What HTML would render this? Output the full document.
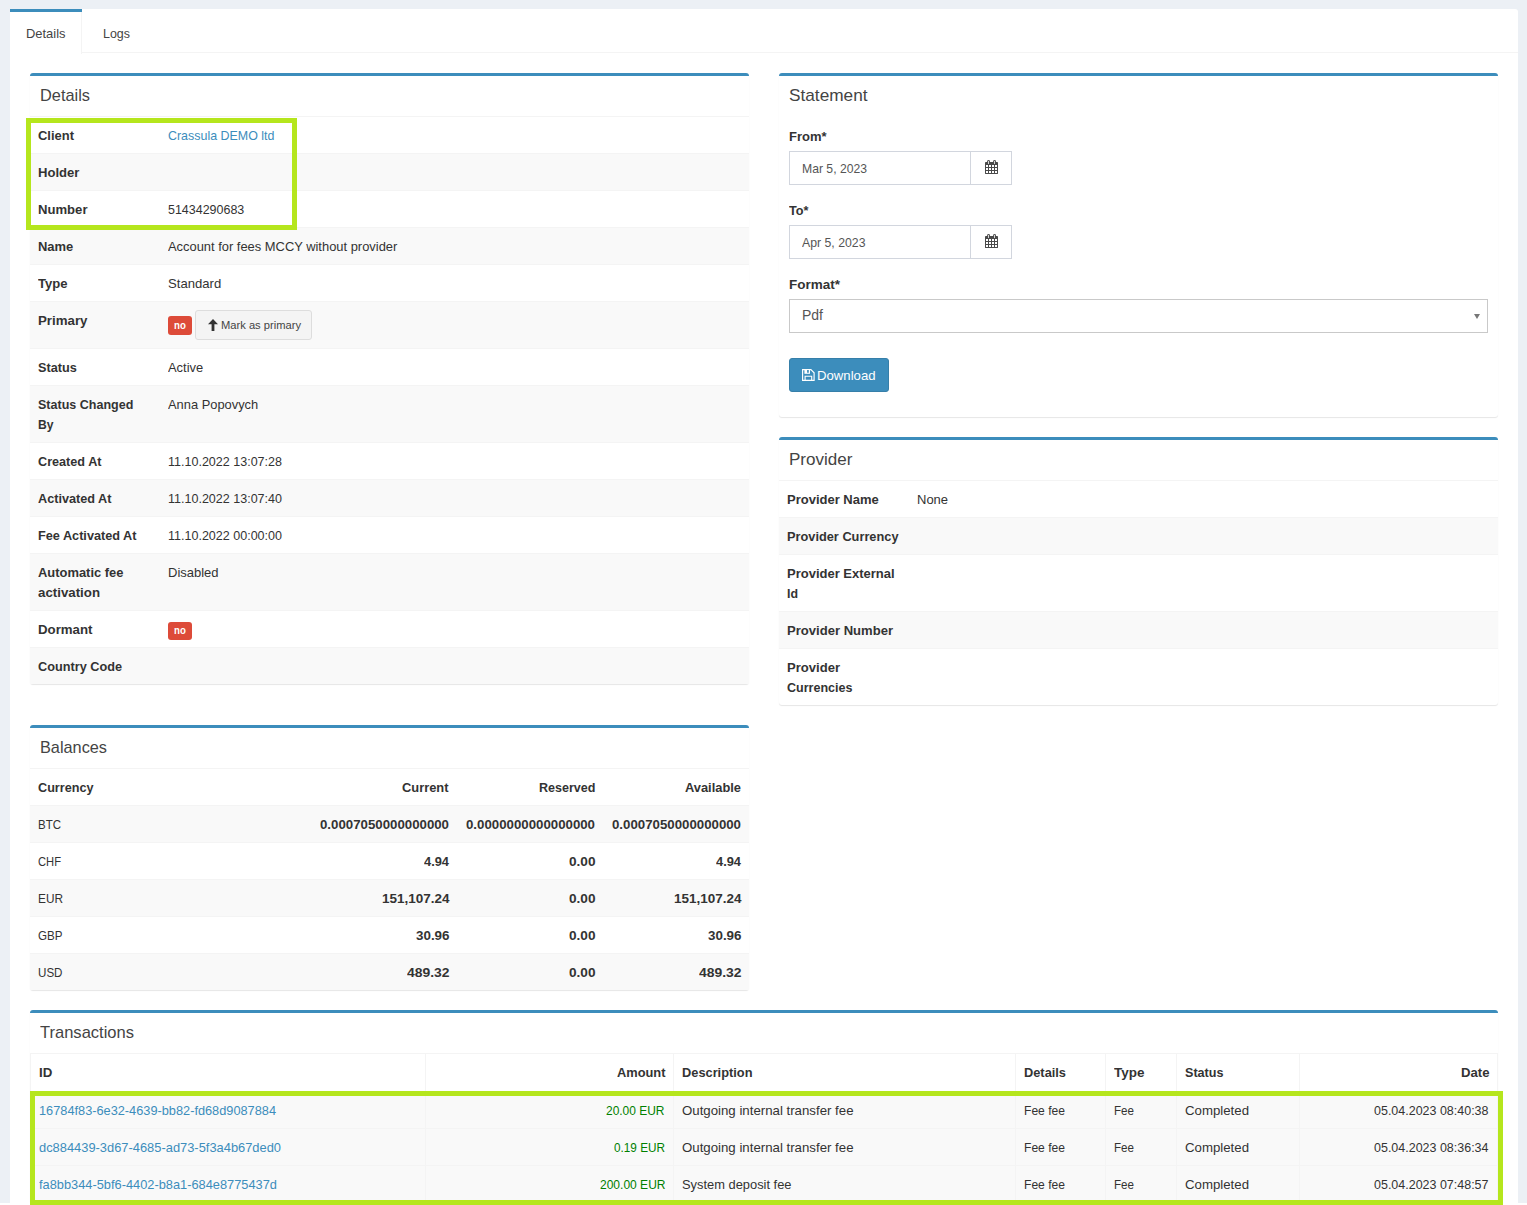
<!DOCTYPE html>
<html lang="en">
<head>
<meta charset="utf-8">
<title>Account details</title>
<style>
*{box-sizing:border-box}
html,body{margin:0;padding:0}
body{width:1527px;height:1205px;overflow:hidden;background:#ecf0f5;font-family:"Liberation Sans", sans-serif;font-size:13px;line-height:20px;color:#333;position:relative}
.t{white-space:nowrap;display:inline-block;transform-origin:0 50%}
.strip{position:absolute;left:0;top:1203px;width:1527px;height:2px;background:#fff}
.card{position:absolute;left:10px;top:9px;width:1508px;height:1196px;background:#fff;border-radius:3px 3px 0 0}
.tabs{position:absolute;left:0;top:0;width:1508px;height:44px;margin:0;padding:0;list-style:none;border-bottom:1px solid #f4f4f4}
.tabs li{position:absolute;top:0;height:44px;border-top:3px solid transparent;padding:12px 0 0 0;color:#444}
.tabs li.active{left:0;width:72px;height:45px;border-top-color:#3c8dbc;background:#fff linear-gradient(#f4f4f4,#f4f4f4) right top/1px 100% no-repeat;padding-left:16px}
.tabs li.logs{left:93px}
.box{position:absolute;background:#fff;border-top:3px solid #3c8dbc;border-radius:3px;box-shadow:0 1px 1px rgba(0,0,0,.1)}
.box-h{height:41px;border-bottom:1px solid #f4f4f4;padding:8px 0 0 10px;font-size:16.6px;line-height:24px;color:#444}
table{border-collapse:separate;border-spacing:0;width:100%;table-layout:fixed}
th,td{padding:9px 8px 7px;vertical-align:top;text-align:left;line-height:20px;border-top:1px solid #f4f4f4;height:37px}
.kv tr:first-child>th,.kv tr:first-child>td,thead tr>th{border-top:0;height:36px}
th{font-weight:700}
.kv th{width:130px}
.kv tr:nth-child(even){background:#f9f9f9}
.kv tr.two>th,.kv tr.two>td{height:57px}
.kv tr.primary>th,.kv tr.primary>td{height:47px}
.kv tr.primary>td{padding-bottom:0}
.lnk{color:#3c8dbc;text-decoration:none}
.badge{display:inline-block;vertical-align:top;width:24px;height:18px;margin-top:2px;margin-bottom:0;border-radius:3px;background:#dd4b39;color:#fff;font-size:10px;font-weight:700;line-height:18px;text-align:center}
.kv tr.primary .badge{margin-top:5px;height:19px;line-height:19px}
.btn-sm{display:inline-block;vertical-align:top;margin:-1px 0 0 3px;width:117px;height:30px;border:1px solid #ddd;border-radius:3px;background:#f4f4f4;color:#444;font-size:11px;line-height:28px;padding-left:12px;white-space:nowrap}
.ico-up{display:inline-block;vertical-align:top;margin:8px 3px 0 0}
.r{text-align:right}
.b{font-weight:700}
.green{color:#008000}
.striped tbody tr:nth-child(odd){background:#f9f9f9}
.bal th:nth-child(n+2),.bal td:nth-child(n+2){width:146px}
.txt{width:1468px}
.txt tbody tr{background:#f9f9f9}
.txt th,.txt td{border-right:1px solid #f4f4f4}
.txt th:first-child,.txt td:first-child{border-left:1px solid #f4f4f4}
.txt thead th{border-top:0;height:37px;border-bottom:0}
.txt tbody tr>td,.txt tbody tr:first-child>td{height:37px;border-top:1px solid #f4f4f4}
.form{padding:10px}
.form label{display:block;font-weight:700;height:20px;margin:0 0 4px 0}
.fg{height:74px}
.ig{display:flex;width:223px;height:34px}
.ig .inp{width:182px;height:34px;border:1px solid #d2d6de;padding:7px 12px 5px;color:#555;line-height:20px}
.ig .add{width:41px;height:34px;border:1px solid #d2d6de;border-left:0;position:relative}
.cal{position:absolute;left:13.5px;top:8px}
.sel{height:34px;width:699px;border:1px solid #c9c9c9;padding:5px 12px;color:#555;font-size:14px;line-height:20px;position:relative;margin-top:0}
.sel i{position:absolute;right:7px;top:14px;width:0;height:0;border-left:3.5px solid transparent;border-right:3.5px solid transparent;border-top:5px solid #777}
.btn{margin-top:9px;width:100px;height:34px;border:1px solid #367fa9;border-radius:3px;background:#3c8dbc;color:#fff;line-height:34px;padding-left:27px;position:relative;white-space:nowrap}
.sav{position:absolute;left:12px;top:10px}
.hl{position:absolute;border:5px solid #b5e61d;pointer-events:none}
</style>
</head>
<body>
<div class="card">
 <ul class="tabs">
  <li class="active"><span class="t" style="transform:scaleX(0.9937);margin-right:-0.25px">Details</span></li>
  <li class="logs"><span class="t" style="transform:scaleX(0.9573);margin-right:-1.20px">Logs</span></li>
 </ul>

 <div class="box" style="left:20px;top:64px;width:719px;height:611px">
  <div class="box-h"><span class="t" style="transform:scaleX(0.9855);margin-right:-0.73px">Details</span></div>
  <table class="kv">
<tr class=""><th><span class="t" style="transform:scaleX(0.9965);margin-right:-0.12px">Client</span></th><td><a class="lnk"><span class="t" style="transform:scaleX(0.9564);margin-right:-4.85px">Crassula DEMO ltd</span></a></td></tr>
<tr class=""><th><span class="t" style="transform:scaleX(1.0055);margin-right:0.23px">Holder</span></th><td></td></tr>
<tr class=""><th><span class="t" style="transform:scaleX(1.0076);margin-right:0.37px">Number</span></th><td><span class="t" style="transform:scaleX(0.9594);margin-right:-3.23px">51434290683</span></td></tr>
<tr class=""><th><span class="t" style="transform:scaleX(0.9966);margin-right:-0.12px">Name</span></th><td><span class="t" style="transform:scaleX(0.9927);margin-right:-1.68px">Account for fees MCCY without provider</span></td></tr>
<tr class=""><th><span class="t" style="transform:scaleX(1.0071);margin-right:0.21px">Type</span></th><td><span class="t" style="transform:scaleX(1.0082);margin-right:0.43px">Standard</span></td></tr>
<tr class="primary"><th><span class="t" style="transform:scaleX(1.0223);margin-right:1.08px">Primary</span></th><td><span class="badge"><span class="t" style="transform:scaleX(0.9657);margin-right:-0.42px">no</span></span><span class="btn-sm"><svg class="ico-up" width="10" height="12" viewBox="0 0 10 12"><path d="M5 0 L10 5.2 L6.4 5.2 L6.4 12 L3.6 12 L3.6 5.2 L0 5.2 Z" fill="#333"/></svg><span class="t" style="transform:scaleX(1.0147);margin-right:1.16px">Mark as primary</span></span></td></tr>
<tr class=""><th><span class="t" style="transform:scaleX(0.9765);margin-right:-0.93px">Status</span></th><td><span class="t" style="transform:scaleX(0.9942);margin-right:-0.21px">Active</span></td></tr>
<tr class="two"><th><span class="t" style="transform:scaleX(0.9629);margin-right:-3.67px">Status Changed</span><br><span class="t" style="transform:scaleX(0.9323);margin-right:-1.12px">By</span></th><td><span class="t" style="transform:scaleX(0.9904);margin-right:-0.88px">Anna Popovych</span></td></tr>
<tr class=""><th><span class="t" style="transform:scaleX(0.9729);margin-right:-1.77px">Created At</span></th><td><span class="t" style="transform:scaleX(0.9634);margin-right:-4.33px">11.10.2022 13:07:28</span></td></tr>
<tr class=""><th><span class="t" style="transform:scaleX(0.9751);margin-right:-1.88px">Activated At</span></th><td><span class="t" style="transform:scaleX(0.9634);margin-right:-4.33px">11.10.2022 13:07:40</span></td></tr>
<tr class=""><th><span class="t" style="transform:scaleX(0.9762);margin-right:-2.41px">Fee Activated At</span></th><td><span class="t" style="transform:scaleX(0.9634);margin-right:-4.33px">11.10.2022 00:00:00</span></td></tr>
<tr class="two"><th><span class="t" style="transform:scaleX(0.9945);margin-right:-0.47px">Automatic fee</span><br><span class="t" style="transform:scaleX(1.0216);margin-right:1.31px">activation</span></th><td><span class="t">Disabled</span></td></tr>
<tr class=""><th><span class="t" style="transform:scaleX(1.0196);margin-right:1.05px">Dormant</span></th><td><span class="badge"><span class="t" style="transform:scaleX(0.9657);margin-right:-0.42px">no</span></span></td></tr>
<tr class=""><th><span class="t" style="transform:scaleX(0.9773);margin-right:-1.95px">Country Code</span></th><td></td></tr>
  </table>
 </div>

 <div class="box" style="left:20px;top:716px;width:719px;height:265px">
  <div class="box-h"><span class="t" style="transform:scaleX(0.9815);margin-right:-1.27px">Balances</span></div>
  <table class="bal striped">
   <thead><tr><th><span class="t" style="transform:scaleX(0.9724);margin-right:-1.58px">Currency</span></th><th class="r"><span class="t" style="transform:scaleX(0.9903);margin-right:-0.45px">Current</span></th><th class="r"><span class="t" style="transform:scaleX(0.9650);margin-right:-2.05px">Reserved</span></th><th class="r"><span class="t" style="transform:scaleX(0.9892);margin-right:-0.61px">Available</span></th></tr></thead>
   <tbody>
<tr><td><span class="t" style="transform:scaleX(0.8846);margin-right:-3.00px">BTC</span></td><td class="r b"><span class="t" style="transform:scaleX(1.0195);margin-right:2.47px">0.0007050000000000</span></td><td class="r b"><span class="t" style="transform:scaleX(1.0195);margin-right:2.47px">0.0000000000000000</span></td><td class="r b"><span class="t" style="transform:scaleX(1.0195);margin-right:2.47px">0.0007050000000000</span></td></tr>
<tr><td><span class="t" style="transform:scaleX(0.8608);margin-right:-3.72px">CHF</span></td><td class="r b"><span class="t" style="transform:scaleX(0.9877);margin-right:-0.31px">4.94</span></td><td class="r b"><span class="t" style="transform:scaleX(1.0469);margin-right:1.19px">0.00</span></td><td class="r b"><span class="t" style="transform:scaleX(0.9877);margin-right:-0.31px">4.94</span></td></tr>
<tr><td><span class="t" style="transform:scaleX(0.9106);margin-right:-2.45px">EUR</span></td><td class="r b"><span class="t" style="transform:scaleX(1.0372);margin-right:2.42px">151,107.24</span></td><td class="r b"><span class="t" style="transform:scaleX(1.0469);margin-right:1.19px">0.00</span></td><td class="r b"><span class="t" style="transform:scaleX(1.0372);margin-right:2.42px">151,107.24</span></td></tr>
<tr><td><span class="t" style="transform:scaleX(0.8919);margin-right:-2.97px">GBP</span></td><td class="r b"><span class="t" style="transform:scaleX(1.0293);margin-right:0.95px">30.96</span></td><td class="r b"><span class="t" style="transform:scaleX(1.0469);margin-right:1.19px">0.00</span></td><td class="r b"><span class="t" style="transform:scaleX(1.0293);margin-right:0.95px">30.96</span></td></tr>
<tr><td><span class="t" style="transform:scaleX(0.8924);margin-right:-2.95px">USD</span></td><td class="r b"><span class="t" style="transform:scaleX(1.0688);margin-right:2.73px">489.32</span></td><td class="r b"><span class="t" style="transform:scaleX(1.0469);margin-right:1.19px">0.00</span></td><td class="r b"><span class="t" style="transform:scaleX(1.0688);margin-right:2.73px">489.32</span></td></tr>
   </tbody>
  </table>
 </div>

 <div class="box" style="left:769px;top:64px;width:719px;height:344px">
  <div class="box-h" style="border-bottom-color:transparent"><span class="t" style="transform:scaleX(1.0378);margin-right:2.86px">Statement</span></div>
  <div class="form">
   <div class="fg"><label><span class="t">From*</span></label><div class="ig"><div class="inp"><span class="t" style="transform:scaleX(0.9369);margin-right:-4.38px">Mar 5, 2023</span></div><div class="add"><svg class="cal" width="13" height="14" viewBox="0 0 13 14"><path fill="#4a4a4a" d="M0 2.4q0-.4.4-.4h12.2q.4 0 .4.4v11.2q0 .4-.4.4H.4q-.4 0-.4-.4z"/><path fill="#fff" d="M1 5h2v2H1zM4 5h2v2H4zM7 5h2v2H7zM10 5h2v2h-2zM1 8h2v2H1zM4 8h2v2H4zM7 8h2v2H7zM10 8h2v2h-2zM1 11h2v2H1zM4 11h2v2H4zM7 11h2v2H7zM10 11h2v2h-2z"/><rect x="2.2" y="0" width="2.7" height="4.5" rx="1.2" fill="#4a4a4a"/><rect x="8.2" y="0" width="2.7" height="4.5" rx="1.2" fill="#4a4a4a"/><rect x="3.1" y="0.9" width=".9" height="3.1" fill="#e8e8e8"/><rect x="9.1" y="0.9" width=".9" height="3.1" fill="#e8e8e8"/></svg></div></div></div>
   <div class="fg"><label><span class="t" style="transform:scaleX(0.9758);margin-right:-0.48px">To*</span></label><div class="ig"><div class="inp"><span class="t" style="transform:scaleX(0.9447);margin-right:-3.72px">Apr 5, 2023</span></div><div class="add"><svg class="cal" width="13" height="14" viewBox="0 0 13 14"><path fill="#4a4a4a" d="M0 2.4q0-.4.4-.4h12.2q.4 0 .4.4v11.2q0 .4-.4.4H.4q-.4 0-.4-.4z"/><path fill="#fff" d="M1 5h2v2H1zM4 5h2v2H4zM7 5h2v2H7zM10 5h2v2h-2zM1 8h2v2H1zM4 8h2v2H4zM7 8h2v2H7zM10 8h2v2h-2zM1 11h2v2H1zM4 11h2v2H4zM7 11h2v2H7zM10 11h2v2h-2z"/><rect x="2.2" y="0" width="2.7" height="4.5" rx="1.2" fill="#4a4a4a"/><rect x="8.2" y="0" width="2.7" height="4.5" rx="1.2" fill="#4a4a4a"/><rect x="3.1" y="0.9" width=".9" height="3.1" fill="#e8e8e8"/><rect x="9.1" y="0.9" width=".9" height="3.1" fill="#e8e8e8"/></svg></div></div></div>
   <div class="fg"><label><span class="t" style="transform:scaleX(1.0382);margin-right:1.88px">Format*</span></label><div class="sel"><span class="t">Pdf</span><i></i></div></div>
   <div class="btn"><svg class="sav" width="13" height="12" viewBox="0 0 13 12"><path fill="none" stroke="#fff" stroke-width="1.15" d="M.6 .6h8.3l3.2 3.2v7.6H.6z"/><path fill="#fff" d="M2.4 .6h5.6v4.2H2.4z"/><path fill="#3c8dbc" d="M5.1 1.1h1.7v2.6H5.1z"/><path fill="none" stroke="#fff" stroke-width="1.1" d="M3.1 11.4V7.3h6.6v4.1"/></svg><span class="t" style="transform:scaleX(1.0133);margin-right:0.77px">Download</span></div>
  </div>
 </div>

 <div class="box" style="left:769px;top:428px;width:719px;height:268px">
  <div class="box-h"><span class="t" style="transform:scaleX(1.0276);margin-right:1.70px">Provider</span></div>
  <table class="kv">
<tr class=""><th><span class="t">Provider Name</span></th><td><span class="t">None</span></td></tr>
<tr class=""><th><span class="t" style="transform:scaleX(0.9829);margin-right:-1.94px">Provider Currency</span></th><td></td></tr>
<tr class="two"><th><span class="t">Provider External</span><br><span class="t" style="transform:scaleX(0.9514);margin-right:-0.56px">Id</span></th><td></td></tr>
<tr class=""><th><span class="t" style="transform:scaleX(1.0049);margin-right:0.52px">Provider Number</span></th><td></td></tr>
<tr class="two"><th><span class="t" style="transform:scaleX(1.0047);margin-right:0.25px">Provider</span><br><span class="t" style="transform:scaleX(0.9643);margin-right:-2.42px">Currencies</span></th><td></td></tr>
  </table>
 </div>

 <div class="box" style="left:20px;top:1001px;width:1468px;height:193px">
  <div class="box-h"><span class="t" style="transform:scaleX(0.9959);margin-right:-0.39px">Transactions</span></div>
  <table class="txt striped">
   <colgroup><col style="width:396px"><col style="width:248px"><col style="width:342px"><col style="width:90px"><col style="width:71px"><col style="width:123px"><col style="width:198px"></colgroup>
   <thead><tr><th><span class="t" style="transform:scaleX(1.0231);margin-right:0.30px">ID</span></th><th class="r"><span class="t" style="transform:scaleX(0.9876);margin-right:-0.61px">Amount</span></th><th><span class="t" style="transform:scaleX(0.9858);margin-right:-1.02px">Description</span></th><th><span class="t" style="transform:scaleX(0.9850);margin-right:-0.64px">Details</span></th><th><span class="t" style="transform:scaleX(1.0377);margin-right:1.11px">Type</span></th><th><span class="t" style="transform:scaleX(0.9689);margin-right:-1.23px">Status</span></th><th class="r"><span class="t" style="transform:scaleX(1.0111);margin-right:0.31px">Date</span></th></tr></thead>
   <tbody>
<tr><td><a class="lnk"><span class="t" style="transform:scaleX(0.9816);margin-right:-4.45px">16784f83-6e32-4639-bb82-fd68d9087884</span></a></td><td class="r green"><span class="t" style="transform:scaleX(0.9199);margin-right:-5.09px">20.00 EUR</span></td><td><span class="t" style="transform:scaleX(1.0185);margin-right:3.11px">Outgoing internal transfer fee</span></td><td><span class="t" style="transform:scaleX(0.9298);margin-right:-3.09px">Fee fee</span></td><td><span class="t" style="transform:scaleX(0.8926);margin-right:-2.41px">Fee</span></td><td><span class="t" style="transform:scaleX(1.0179);margin-right:1.12px">Completed</span></td><td class="r"><span class="t" style="transform:scaleX(0.9599);margin-right:-4.78px">05.04.2023 08:40:38</span></td></tr>
<tr><td><a class="lnk"><span class="t" style="transform:scaleX(0.9905);margin-right:-2.33px">dc884439-3d67-4685-ad73-5f3a4b67ded0</span></a></td><td class="r green"><span class="t" style="transform:scaleX(0.9047);margin-right:-5.38px">0.19 EUR</span></td><td><span class="t" style="transform:scaleX(1.0185);margin-right:3.11px">Outgoing internal transfer fee</span></td><td><span class="t" style="transform:scaleX(0.9298);margin-right:-3.09px">Fee fee</span></td><td><span class="t" style="transform:scaleX(0.8926);margin-right:-2.41px">Fee</span></td><td><span class="t" style="transform:scaleX(1.0179);margin-right:1.12px">Completed</span></td><td class="r"><span class="t" style="transform:scaleX(0.9599);margin-right:-4.78px">05.04.2023 08:36:34</span></td></tr>
<tr><td><a class="lnk"><span class="t" style="transform:scaleX(0.9857);margin-right:-3.45px">fa8bb344-5bf6-4402-b8a1-684e8775437d</span></a></td><td class="r green"><span class="t" style="transform:scaleX(0.9248);margin-right:-5.33px">200.00 EUR</span></td><td><span class="t" style="transform:scaleX(0.9904);margin-right:-1.06px">System deposit fee</span></td><td><span class="t" style="transform:scaleX(0.9298);margin-right:-3.09px">Fee fee</span></td><td><span class="t" style="transform:scaleX(0.8926);margin-right:-2.41px">Fee</span></td><td><span class="t" style="transform:scaleX(1.0179);margin-right:1.12px">Completed</span></td><td class="r"><span class="t" style="transform:scaleX(0.9599);margin-right:-4.78px">05.04.2023 07:48:57</span></td></tr>
   </tbody>
  </table>
 </div>
</div>
<div class="strip"></div>
<div class="hl" style="left:26px;top:118px;width:271px;height:112px"></div>
<div class="hl" style="left:30px;top:1091px;width:1473px;height:114px"></div>
</body>
</html>
